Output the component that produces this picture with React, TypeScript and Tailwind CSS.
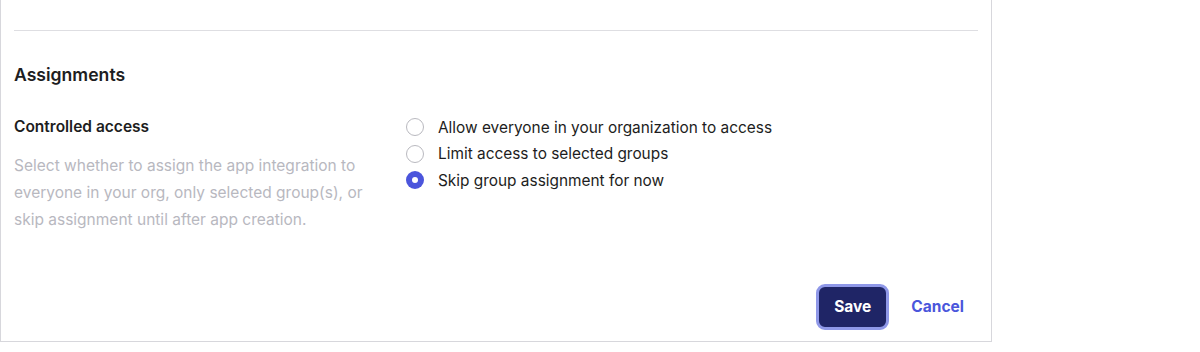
import { useState } from 'react'

const options = [
  'Allow everyone in your organization to access',
  'Limit access to selected groups',
  'Skip group assignment for now',
]

export default function App() {
  const [selected, setSelected] = useState(2)

  return (
    <div className="h-[352px] w-[1200px] bg-white font-['Inter','Liberation_Sans',sans-serif] text-[#1d1d21]">
      <div className="flex h-[342px] w-[992px] flex-col border-x border-b border-[#d7d7dc] px-[13px]">
        <div className="h-[31px] border-b border-[#dedee2]" />

        <h2 className="mt-[32px] text-[17.6px] font-semibold leading-[24px]">Assignments</h2>

        <div className="mt-[28px] flex">
          <div className="w-[392px] pr-[40px]">
            <div className="text-[15.5px] font-semibold leading-[24px]">Controlled access</div>
            <p className="mt-[13px] w-[352px] text-[15.5px] leading-[27px] text-[#b8b8bf]">
              Select whether to assign the app integration to everyone in your org, only selected
              group(s), or skip assignment until after app creation.
            </p>
          </div>

          <div className="-mt-[1px] flex flex-col">
            {options.map((label, i) => (
              <label
                key={label}
                className="flex h-[26.5px] cursor-pointer items-center gap-[14px] text-[15.4px]"
                onClick={() => setSelected(i)}
              >
                {selected === i ? (
                  <span className="flex h-[18px] w-[18px] items-center justify-center rounded-full bg-[#4b55dc]">
                    <span className="h-[6px] w-[6px] rounded-full bg-white" />
                  </span>
                ) : (
                  <span className="h-[18px] w-[18px] rounded-full border-[1.5px] border-[#b9b9bf] bg-white" />
                )}
                <span>{label}</span>
              </label>
            ))}
          </div>
        </div>

        <div className="mt-auto mb-[11px] flex items-center justify-end gap-[22px] pr-[14px]">
          <button className="h-[46px] rounded-[9px] border-[3px] border-[#8f98e8] bg-[#1f2566] px-[15px] text-[15.5px] font-bold text-white">
            Save
          </button>
          <button className="text-[15.5px] font-bold text-[#4b56dc]">Cancel</button>
        </div>
      </div>
    </div>
  )
}
